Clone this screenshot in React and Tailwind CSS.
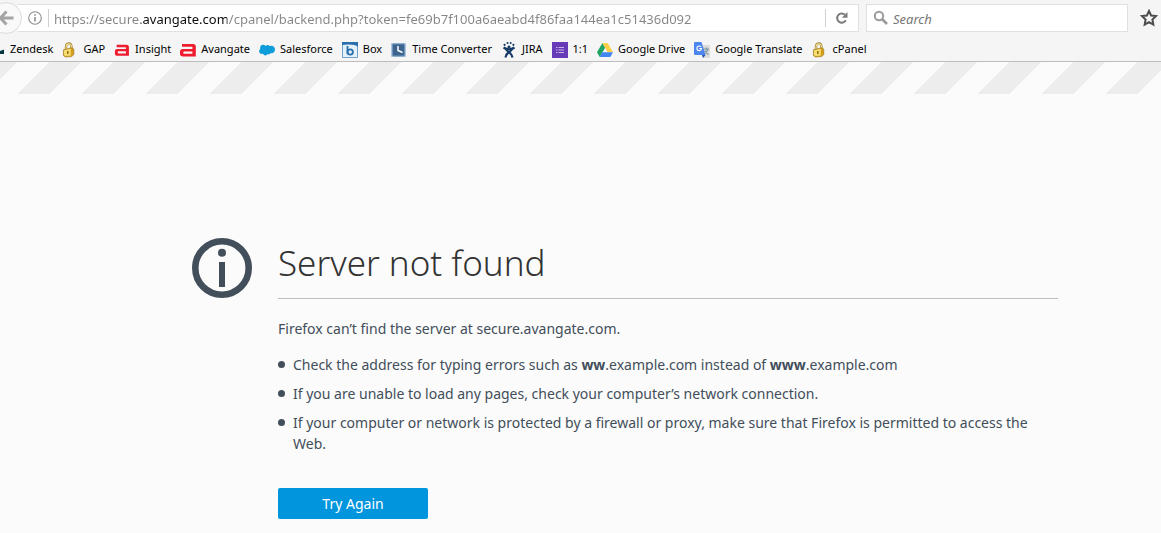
const lock = (
  <svg viewBox="0 0 16 16" className="size-4">
    <path d="M4 8V5C4 .4 9.4 .2 9.4 4.4V7" fill="none" stroke="#a08230" strokeWidth="2.4" />
    <path d="M4 8V5C4 1 9.4 .8 9.4 4.4V7" fill="none" stroke="#f3e19a" strokeWidth="1.1" />
    <path d="M1.4 7.8 9.6 5.8 11.8 7V12.6L9.6 14.6 3.4 15 1.4 13.4Z" fill="#d39f1a" stroke="#9a761c" strokeWidth=".6" />
    <path d="M2 8.2 8.8 6.8V13.6L3.6 14 2 13Z" fill="#f7dd70" />
    <path d="M5 9.2 6.6 9V11.8L5 12Z" fill="#8d6a14" />
  </svg>
);

const avangatePath = "M2 2H13Q15.8 2 15.8 4.6V14.4H3Q0 14.4 0 11.8V9.6Q0 7 3 7H12.4V4.8H2ZM4.2 9.4Q3.2 9.4 3.2 10.6T4.2 11.8H12.4V9.4Z";

const insight = (
  <svg viewBox="-1 -1 18 18" className="size-4">
    <path d={avangatePath} fill="#ee1c2e" fillRule="evenodd" />
  </svg>
);

const avangate = (
  <svg viewBox="0 0 16 16" className="size-4">
    <path d={avangatePath} fill="#ee1c2e" fillRule="evenodd" />
  </svg>
);

const salesforce = (
  <svg viewBox="0 0 16 16" className="size-4">
    <path d="M6.6 4.1C7.9 2.5 9.8 2.7 10.6 4.2 13.2 3 16 4.7 16 7.5c0 2.5-2 4.1-4.2 3.6-.7 1.3-2.1 1.6-3.1 1-.9 1.7-3.8 1.8-4.6-.3C1.5 12.3-.1 10.9.1 8.9.2 7.9.7 7.2 1.3 6.7.7 4.3 2.2 2.7 4 2.7c1.1 0 2 .5 2.6 1.4Z" fill="#0d9ddb" />
  </svg>
);

const box = (
  <svg viewBox="0 0 16 16" className="size-4">
    <path d="M.5 .5H15.500V15.500H.5Z" fill="#e6f0f8" stroke="#6fa0cb" />
    <path d="M0 0H16V5Q12 1.600 0 3Z" fill="#2a70ad" />
    <path d="M5.500 4V12" stroke="#2a70ad" strokeWidth="1.800" />
    <circle cx="8.200" cy="10" r="2.700" fill="none" stroke="#2a70ad" strokeWidth="1.800" />
  </svg>
);

const clock = (
  <svg viewBox="0 0 16 16" className="size-4">
    <rect x="0" y="1" width="15" height="14" rx="1" fill="#a9c5e2" />
    <rect x="1.500" y="2" width="12" height="12" rx="1" fill="#3d648e" stroke="#6d94bb" />
    <path d="M7 4V8.500L11.500 10.500" fill="none" stroke="#fff" strokeWidth="1.500" />
  </svg>
);

const jira = (
  <svg viewBox="0 0 16 16" className="size-4">
    <g fill="none" stroke="#123a66" strokeWidth="2.200">
      <path d="M2.500 5.500Q8 9 13.500 5.500" />
      <path d="M4 6Q5.500 8.500 8.500 10.500 11 12.500 11.500 15.500" />
      <path d="M12 6Q10.500 8.500 7.500 10.500 4.700 12.500 4.500 15.500" />
    </g>
    <g fill="#123a66">
      <circle cx="8" cy="5" r="1.600" />
      <circle cx="3.600" cy="2.800" r="1.100" />
      <circle cx="6.500" cy="1.100" r="1" />
      <circle cx="9.700" cy="1.100" r="1" />
      <circle cx="12.400" cy="2.800" r="1.100" />
    </g>
  </svg>
);

const form = (
  <svg viewBox="0 0 16 16" className="size-4">
    <path d="M0 0H16V16H0Z" fill="#673ab7" />
    <path d="M4 5.500h1.500M4 8h1.500M4 10.500h1.500M6.500 5.500H12M6.500 8H12M6.500 10.500H12" stroke="#c9b6e6" strokeWidth="1" />
  </svg>
);

const drive = (
  <svg viewBox="0 0 16 16" className="size-4">
    <path d="M5.400 1 0 10.300 2.700 15 8.100 5.700Z" fill="#1fa463" />
    <path d="M5.400 1H10.700L16 10.300H10.700Z" fill="#ffcf48" />
    <path d="M5.400 10.300H16L13.300 15H2.700Z" fill="#4285f4" />
  </svg>
);

const translate = (
  <svg viewBox="0 0 16 16" className="size-4">
    <path d="M6 3H16V16H9Z" fill="#dcdcdc" />
    <path d="M9.500 7H15M12.200 5.500V7M14 7Q13 10.500 10 12M10.800 8.500Q12 11 14.500 12.500" fill="none" stroke="#78909c" strokeWidth="1.100" />
    <path d="M8 13H11.500L9 16Z" fill="#2450b0" />
    <path d="M1 0H7.500L11.500 13H1Q0 13 0 12V1Q0 0 1 0Z" fill="#4a86ee" />
    <path d="M7.200 5Q6.400 4 5.200 4A2.300 2.300 0 1 0 7.500 6.500H5.300" fill="none" stroke="#fff" strokeWidth="1.100" />
  </svg>
);

const bookmarks = [
  { label: "GAP", icon: lock },
  { label: "Insight", icon: insight },
  { label: "Avangate", icon: avangate },
  { label: "Salesforce", icon: salesforce },
  { label: "Box", icon: box },
  { label: "Time Converter", icon: clock },
  { label: "JIRA", icon: jira },
  { label: "1:1", icon: form },
  { label: "Google Drive", icon: drive },
  { label: "Google Translate", icon: translate },
  { label: "cPanel", icon: lock },
];

function Toolbar() {
  return (
    <div className="flex h-9 items-center pr-[3px]">
      <button aria-label="Back" className="z-10 -ml-2.5 flex size-8 shrink-0 items-center justify-center rounded-full border border-[#dcdcdc] bg-[#f9f9f9]">
        <svg viewBox="0 0 16 16" className="size-4">
          <path d="M8.500 1.500 2.500 8 8.500 14.500M2.500 8H15.500" fill="none" stroke="#a5a5a5" strokeWidth="3" />
        </svg>
      </button>
      <div className="-ml-1 flex h-7 flex-1 items-center border border-l-0 border-[#e0e0e0] bg-white pl-2.5">
        <button aria-label="Site information" className="shrink-0">
          <svg viewBox="0 0 14 14" className="size-3.5">
            <circle cx="7" cy="7" r="6.300" fill="none" stroke="#8c8c8c" strokeWidth="1.100" />
            <path d="M7 6V10.500M7 3.200V4.800" stroke="#8c8c8c" strokeWidth="1.600" />
          </svg>
        </button>
        <span className="ml-1.5 h-[18px] w-px bg-[#d0d0d0]" />
        <input
          aria-label="Address"
          defaultValue="https://secure.avangate.com/cpanel/backend.php?token=fe69b7f100a6aeabd4f86faa144ea1c51436d092"
          className="ml-[5px] h-[26px] min-w-0 flex-1 bg-[linear-gradient(90deg,#858585_87px,#0c0c0d_87px,#0c0c0d_173px,#858585_173px)] bg-clip-text pt-0.5 text-[13px] text-transparent outline-none"
        />
        <span className="h-[18px] w-px bg-[#d0d0d0]" />
        <button aria-label="Reload" className="flex w-8 shrink-0 justify-center">
          <svg viewBox="0 0 14 14" className="size-3.5">
            <path d="M10.800 9.300A4.600 4.600 0 1 1 10 3.800" fill="none" stroke="#7c7c7c" strokeWidth="2" />
            <path d="M12.500 1V6.700H6.800Z" fill="#7c7c7c" />
          </svg>
        </button>
      </div>
      <label className="ml-[7px] flex h-7 w-[262px] items-center gap-1 border border-[#e0e0e0] bg-white pl-1.5">
        <svg viewBox="0 0 16 16" className="size-4 shrink-0">
          <circle cx="6" cy="6" r="4.200" fill="none" stroke="#9a9a9a" strokeWidth="2" />
          <path d="M9 9 14 14" stroke="#9a9a9a" strokeWidth="2.600" />
        </svg>
        <input aria-label="Search" placeholder="Search" className="h-[26px] min-w-0 flex-1 pt-0.5 text-[13px] italic outline-none placeholder:text-[#757575]" />
      </label>
      <button aria-label="Bookmark this page" className="ml-3 shrink-0">
        <svg viewBox="0 0 18 18" className="size-[18px]">
          <path d="M9 2 11.100 6.500 16 7.100 12.400 10.500 13.300 15.500 9 13.100 4.700 15.500 5.600 10.500 2 7.100 6.900 6.500Z" fill="none" stroke="#4c4c4c" strokeWidth="2" />
        </svg>
      </button>
    </div>
  );
}

export default function App() {
  return (
    <div className="min-h-screen bg-[#fbfbfb] font-['Noto_Sans',sans-serif]">
      <header className="border-b border-[#bdbdbd] bg-[#f5f5f5]">
        <Toolbar />
        <nav aria-label="Bookmarks" className="flex h-[25px] items-center gap-[9px] overflow-hidden pt-0.5 text-[11px] whitespace-nowrap text-black">
          <a href="#zendesk" className="flex items-center gap-[5px]">
            <svg viewBox="0 0 5 16" className="h-4 w-[5px]">
              <path d="M0 9 4 7.500V12H0Z" fill="#03363d" />
            </svg>
            Zendesk
          </a>
          {bookmarks.map(({ label, icon }) => (
            <a key={label} href={"#" + label} className="flex items-center gap-[5px]">
              {icon}
              {label}
            </a>
          ))}
        </nav>
      </header>

      <div className="h-8 bg-[linear-gradient(135deg,#ededed_25%,#fbfbfb_25%,#fbfbfb_50%,#ededed_50%,#ededed_75%,#fbfbfb_75%)] bg-size-[64px_64px] bg-position-[-15px_0]" />

      <main className="flex max-w-[1058px] gap-[26px] pt-36 pl-48 text-[#424e5a]">
        <svg viewBox="0 0 60 60" className="size-[60px] shrink-0">
          <circle cx="30" cy="30" r="26.700" fill="none" stroke="#424e5a" strokeWidth="6.600" />
          <circle cx="30" cy="14.800" r="4" fill="#424e5a" />
          <path d="M27 24H33V49H27Z" fill="#424e5a" />
        </svg>
        <div className="flex-1 text-sm leading-[21px]">
          <h1 className="border-b border-[#bfbfbf] pb-2.5 text-[35px] leading-[50px] font-light text-[#333]">Server not found</h1>
          <p className="mt-[19px]">Firefox can’t find the server at secure.avangate.com.</p>
          <ul className="mt-[15px] flex list-none flex-col gap-2">
            {[
              <>Check the address for typing errors such as <b>ww</b>.example.com instead of <b>www</b>.example.com</>,
              <>If you are unable to load any pages, check your computer’s network connection.</>,
              <>If your computer or network is protected by a firewall or proxy, make sure that Firefox is permitted to access the Web.</>,
            ].map((tip, i) => (
              <li key={i} className="flex gap-2">
                <span className="mt-[7px] size-[7px] shrink-0 rounded-full bg-[#424e5a]" />
                <span>{tip}</span>
              </li>
            ))}
          </ul>
          <button className="mt-[34px] h-[31px] w-[150px] rounded-xs bg-[#0095dd] text-white">Try Again</button>
        </div>
      </main>
    </div>
  );
}
